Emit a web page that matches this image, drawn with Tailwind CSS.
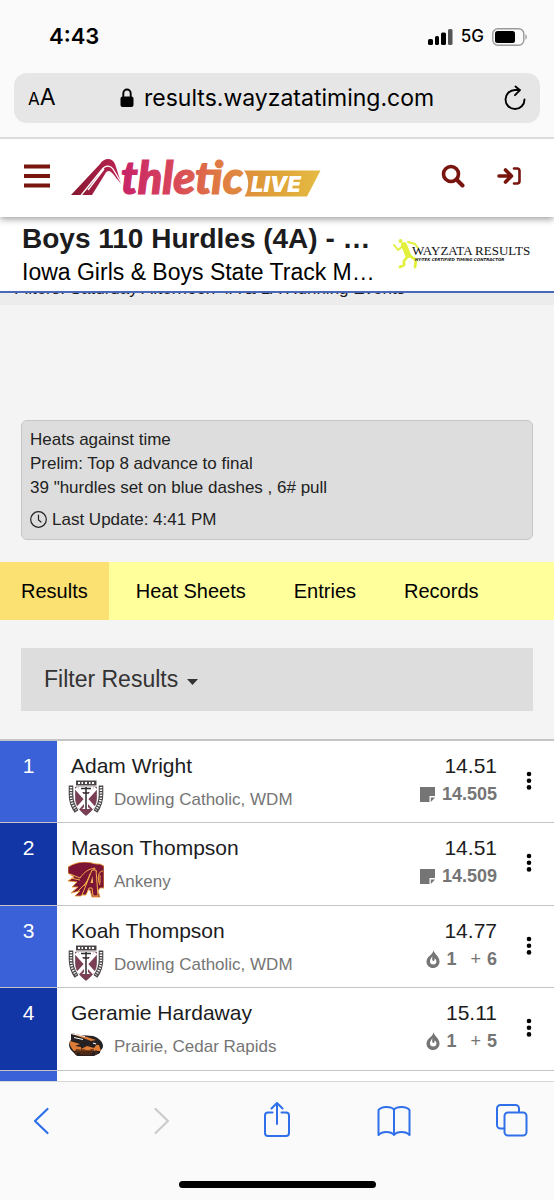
<!DOCTYPE html>
<html lang="en">
<head>
<meta charset="utf-8">
<meta name="viewport" content="width=device-width, initial-scale=1">
<title>Boys 110 Hurdles (4A)</title>
<script src="https://cdn.jsdelivr.net/npm/@tailwindcss/browser@4"></script>
</head>
<body class="bg-[#f4f4f4] text-[#1c1c1e] font-['Liberation_Sans',Arial,sans-serif]">
<svg class="hidden" aria-hidden="true">
  <symbol id="crest" viewBox="0 0 36 36">
    <path d="M8 .5h20.500v5H8z" fill="#4a4648"/>
    <path d="M10 3h2m1.500 0h1.500m2 0h2m2 0h1.500m1.500 0h2" stroke="#fff" stroke-width="1.800"/>
    <path d="M3 5.500v9c0 6 2 12 5.500 17M33 5.500v9c0 6-2 12-5.500 17" fill="none" stroke="#4a4648" stroke-width="4.600"/>
    <path d="M3 7v8c0 6 2 11 5 15M33 7v8c0 6-2 11-5 15" fill="none" stroke="#fff" stroke-width="2.400" stroke-dasharray="1.300 1.300"/>
    <path d="M7.500 7h21V18c0 8-4.500 13-10.500 17.500C12 31 7.500 26 7.500 18z" fill="#7a3f55" stroke="#5d3344" stroke-width=".6"/>
    <path d="M8 8l18 20M28 8L10 28" stroke="#fff" stroke-width="3.500"/>
    <path d="M10 7h16l-3 5h-3v15l2 2h-8l2-2V12h-3z" fill="#fff"/>
    <path d="M13 8.500h10M18 7v22M15.500 13h5" stroke="#2e2a2c" stroke-width="1.500"/>
  </symbol>
  <symbol id="hawk" viewBox="0 0 36 36">
    <path d="M0 5C8 0 17-1 24 1c3 1 5 1 8 1l4 2v22h-4l-2 3 2 6h-8l-2-7h-4l-5 6H7l5-5-9 2 7-6-6 0 5-5-9-1 6-4-6-4z" fill="#7c1435" stroke="#eaa03a" stroke-width=".9"/>
    <path d="M2 12l10 4M3 16l9 2M12 16c5-7 9-9 15-10L16 24M9 30l8-8 4-5M22 12l-4 10h5zM29 9c-4 3-4 12-1 17M35 9c-5 0-6 8-3 14M32 13v8" fill="none" stroke="#f3b04a" stroke-width="1"/>
    <path d="M14 33l10-25h4l2 26h-5l-1-8h-3l-3 7z" fill="#7c1435" stroke="#f3b04a" stroke-width="1"/>
    <path d="M22.500 21l2-7 .5 7z" fill="#f7c65f"/>
  </symbol>
  <symbol id="prairie" viewBox="0 0 36 36">
    <path d="M3 6l9 2 13 1c6 2 10 6 10 10 0 3-3 4-3 7l-6 3H9l-6-6c-3-4-2-8 0-10z" fill="#252122"/>
    <path d="M1 6l14 5 8 3 5-1-9-3zM2 14l10 3-5 2 6 1 6-3 12 1 2 6H6c-3-3-5-7-4-10z" fill="#df7c35"/>
    <path d="M3 6.500l14 3M6 10.500l9 2" stroke="#fff" stroke-width="1"/>
    <path d="M13 17l8-3 8 3-3 4-7-2-6 3z" fill="#252122"/>
    <path d="M8 23v5m0-5h3v2H8m5 3v-5h3v2h-3l3 3m2-5-1 5m2-5v5m2-5v5m2 0v-5h3m-3 2h2m3-2v5" fill="none" stroke="#5a2c14" stroke-width="1.400"/>
    <path d="M25 16l3 1" stroke="#fff" stroke-width="1.200"/>
  </symbol>
  <symbol id="note" viewBox="0 0 15 15"><path d="M0 0h15v9H9.500v6H0z" fill="#757575"/><path d="M15 10.500L10.800 15v-4.500z" fill="#757575"/></symbol>
  <symbol id="flame" viewBox="0 0 14 18"><path d="M7.500 0C8 4 13.500 6 13.500 11.500c0 4-3 6.500-6.500 6.500S.5 15.500.5 11.500C.5 9 2 7 4 5.500 6 4 7.300 2 7.500 0z" fill="#757575"/><path d="M6.500 6C5.500 8 4 9 4 11.300a3.200 3.200 0 0 0 6.400 0c0-1.500-1-2.300-1.800-3 .2 1.500-.2 2.600-1.100 2.600C6 10.900 6 8.500 6.500 6z" fill="#fff"/></symbol>
  <symbol id="dots" viewBox="0 0 6 20"><circle cx="3" cy="3" r="2.300"/><circle cx="3" cy="9.700" r="2.300"/><circle cx="3" cy="16.400" r="2.300"/></symbol>
</svg>

<div class="flex h-screen flex-col overflow-hidden">
  <header class="shrink-0 border-b-2 border-[#dcdcdc] bg-[#fafafa] text-black font-['Inter',sans-serif]">
    <div class="flex h-[73px] items-center justify-between pl-[49px] pr-[26px]">
      <span class="text-[22px] font-semibold">4:43</span>
      <div class="flex items-center">
        <svg class="mr-2 h-4 w-[25px]" viewBox="0 0 25 16"><rect y="10" width="5" height="6" rx="1.500"/><rect x="7" y="7" width="4" height="9" rx="1.500"/><rect x="13" y="3.500" width="5" height="12.500" rx="1.500"/><rect x="20" width="4.500" height="16" rx="1.500" fill="#555"/></svg>
        <span class="mr-2 text-[17px] font-medium">5G</span>
        <svg class="h-[18px] w-[36px]" viewBox="0 0 36 18"><rect x=".8" y=".8" width="31" height="16.400" rx="5" fill="none" stroke="#9a9a9a" stroke-width="1.400"/><rect x="3" y="3" width="20" height="12" rx="2.500"/><path d="M33.500 6q2.500 3 0 6z" fill="#888"/></svg>
      </div>
    </div>
    <div class="px-[14px] pb-[14px]">
      <div class="flex h-[50px] items-center justify-between rounded-[13px] bg-[#e6e6e6] px-[14px]">
        <button type="button" aria-label="Page settings" class="w-8 whitespace-nowrap text-left leading-6"><span class="text-[17px]">A</span><span class="text-[23px]">A</span></button>
        <div class="flex items-center gap-[10px]">
          <svg class="h-5 w-[14px]" viewBox="0 0 14 20"><rect x=".5" y="8.500" width="13" height="10.500" rx="2"/><path d="M3.300 9V5.500a3.700 4 0 0 1 7.400 0V9" fill="none" stroke="#000" stroke-width="1.900"/></svg>
          <label for="url" class="sr-only">Address</label>
          <input id="url" type="text" value="results.wayzatatiming.com" class="w-[300px] bg-transparent text-[23px] leading-8 outline-none">
        </div>
        <button type="button" aria-label="Reload"><svg class="h-[26px] w-[22px]" viewBox="0 0 22 26" fill="none" stroke="#000" stroke-width="1.900" stroke-linecap="round" stroke-linejoin="round"><path d="M20.500 14.500A9.500 9.500 0 1 1 11 5h5M11.500 1.500L16 5.200l-5 5"/></svg></button>
      </div>
    </div>
  </header>

  <main class="min-h-0 flex-1 overflow-hidden">
    <div class="relative z-10 flex h-[78px] items-center bg-white pl-6 pr-[33px] shadow-[0_2px_7px_rgba(0,0,0,0.4)]">
      <button type="button" aria-label="Menu" class="pb-1"><svg class="h-6 w-[26px]" viewBox="0 0 26 24" fill="#78150f"><rect width="26" height="4" y=".5"/><rect width="26" height="4" y="10"/><rect width="26" height="4" y="19.500"/></svg></button>
      <a href="#" class="ml-5" aria-label="AthleticLIVE home">
        <svg class="h-11 w-[252px]" viewBox="70 156 252 44">
          <defs>
            <linearGradient id="mark" x1="0" x2="1"><stop stop-color="#84172f"/><stop offset="1" stop-color="#bd2452"/></linearGradient>
            <linearGradient id="word" gradientUnits="userSpaceOnUse" x1="122" x2="320" y1="0" y2="0"><stop stop-color="#c62367"/><stop offset=".25" stop-color="#d8445a"/><stop offset=".5" stop-color="#e07c42"/><stop offset=".75" stop-color="#dea037"/><stop offset="1" stop-color="#e5bb43"/></linearGradient>
          </defs>
          <path d="M71 195L100 164C104 158 112 157 115 164L121.500 184C117 180 112 171 109 171C107 171 106 172 105 174L92 195z" fill="url(#mark)"/>
          <path d="M80.500 196L102 169.500C106 164 111 166 113 169L122 184M88 190L104 169" stroke="#fff" stroke-width="1.300" fill="none"/>
          <text x="121" y="194" font-family="Lato" font-size="45" font-weight="900" font-style="italic" fill="url(#word)" stroke="url(#word)" stroke-width="1.200">thletic</text>
          <path d="M244 170.500h76.500L307 196.500h-62.500c5-8 5-19-.5-26z" fill="url(#word)"/>
          <text x="251" y="191.500" font-family="Inter" font-size="22" font-weight="900" font-style="italic" fill="#fff">LIVE</text>
        </svg>
      </a>
      <div class="ml-auto flex items-center gap-8 pb-1 text-[#78150f]">
        <button type="button" aria-label="Search"><svg class="h-6 w-6" viewBox="0 0 24 24" fill="none" stroke="currentColor"><circle cx="10" cy="10" r="7.500" stroke-width="3.600"/><path d="M15.500 15.500l6 6" stroke-width="4" stroke-linecap="round"/></svg></button>
        <button type="button" aria-label="Log in"><svg class="h-5 w-6" viewBox="0 0 24 20" fill="none" stroke="currentColor" stroke-width="3.600" stroke-linecap="round" stroke-linejoin="round"><path d="M2 10h12M8.500 4L14.500 10l-6 6"/><path d="M17 2.500h3a2.500 2.500 0 0 1 2.500 2.500v10a2.500 2.500 0 0 1-2.500 2.500h-3" stroke-width="2.600"/></svg></button>
      </div>
    </div>

    <div class="flex h-[76px] items-center justify-between border-b-2 border-[#4a68b8] bg-white pl-[22px] pr-[23px]">
      <div class="min-w-0 pt-1 whitespace-nowrap">
        <h1 class="text-[28px] leading-8 font-bold">Boys 110 Hurdles (4A) - …</h1>
        <p class="text-[23px] leading-[34px] text-black">Iowa Girls &amp; Boys State Track M…</p>
      </div>
      <svg class="h-8 w-[140px] shrink-0" viewBox="391 239 140 32" role="img" aria-label="Wayzata Results">
        <g fill="none" stroke="#e2f03c" stroke-linecap="round" stroke-linejoin="round">
          <path d="M404 246l4 10" stroke-width="6"/><path d="M403 247l-5 4-4-5M408 243l7 2 3 4" stroke-width="2"/><path d="M408 257l-4 5 0 4-4 2M410 257l6 4-1 7" stroke-width="2.800"/><circle cx="400.500" cy="242" r="1" stroke-width="2"/>
        </g>
        <text x="412" y="256" font-family="Liberation Serif" font-size="13" fill="#111">WAYZATA RESULTS</text>
        <text x="415" y="262" font-family="DejaVu Sans" font-size="4" font-style="italic" font-weight="700" fill="#222">HY-TEK CERTIFIED TIMING CONTRACTOR</text>
      </svg>
    </div>
    <div class="flex h-3 items-end overflow-hidden bg-[#ececec] px-[14px] pb-[6px]">
      <p class="whitespace-nowrap text-[17px] leading-5">Filters: Saturday Afternoon 4A &amp; 1A Running Events</p>
    </div>

    <section class="mx-[21px] mt-[115px] rounded-md border border-[#c6c6c6] bg-[#dddddd] px-2 py-[7px] text-[17px] leading-6 text-[#222]">
      <p>Heats against time</p>
      <p>Prelim: Top 8 advance to final</p>
      <p>39 "hurdles set on blue dashes , 6# pull</p>
      <p class="mt-2 flex items-center gap-1"><svg class="h-[18px] w-[18px]" viewBox="0 0 18 18" fill="none" stroke="#222" stroke-width="1.200" stroke-linecap="round"><circle cx="8.500" cy="8.500" r="7.800"/><path d="M8.500 4v5l2.500 2"/></svg>Last Update: 4:41 PM</p>
    </section>

    <nav class="mt-[22px] flex h-[58px] bg-[#ffff9c] text-[20px] text-black">
      <a href="#" aria-current="page" class="mr-[3px] flex items-center bg-[#fae172] px-[21px]">Results</a>
      <a href="#" class="flex items-center px-6">Heat Sheets</a>
      <a href="#" class="flex items-center px-6">Entries</a>
      <a href="#" class="flex items-center px-6">Records</a>
    </nav>

    <div class="mt-7 px-[21px]">
      <button type="button" class="flex h-[63px] w-full items-center gap-[9px] bg-[#dddddd] px-[23px] text-[23px] text-[#333]">Filter Results <svg class="mt-1 h-[6px] w-[11px]" viewBox="0 0 11 6"><path d="M0 0h11L5.500 6z" fill="#333"/></svg></button>
    </div>

    <table class="mt-7 w-full border-separate border-spacing-0 bg-white text-[21px] leading-7 [&_td]:border-t [&_td]:border-[#c4c4c4] [&_td]:p-0 [&_td]:align-top">
      <tbody>
        <tr class="h-[83px] [&>td]:border-t-2">
          <td class="w-[57px] bg-[#3a61d8]"><div class="pt-[11px] text-center text-white">1</div></td>
          <td><div class="pt-[11px] pl-[14px]">Adam Wright</div>
            <div class="flex items-center gap-[10px] pl-[11px]"><svg class="h-9 w-9"><use href="#crest"/></svg><span class="pt-1 text-[17px] text-[#757575]">Dowling Catholic, WDM</span></div></td>
          <td class="w-[130px]"><div class="pt-[11px] text-right">14.51</div><div class="mt-[2px] flex items-center justify-end gap-[7px] text-[18px] leading-6 font-bold text-[#757575]"><svg class="h-[15px] w-[15px]"><use href="#note"/></svg>14.505</div></td>
          <td class="w-[57px]"><button type="button" aria-label="More" class="mt-[30px] ml-[29px] block"><svg class="h-5 w-[6px]"><use href="#dots"/></svg></button></td>
        </tr>
        <tr class="h-[83px]">
          <td class="bg-[#1336a6]"><div class="pt-[11px] text-center text-white">2</div></td>
          <td><div class="pt-[11px] pl-[14px]">Mason Thompson</div>
            <div class="flex items-center gap-[10px] pl-[11px]"><svg class="h-9 w-9"><use href="#hawk"/></svg><span class="pt-1 text-[17px] text-[#757575]">Ankeny</span></div></td>
          <td><div class="pt-[11px] text-right">14.51</div><div class="mt-[2px] flex items-center justify-end gap-[7px] text-[18px] leading-6 font-bold text-[#757575]"><svg class="h-[15px] w-[15px]"><use href="#note"/></svg>14.509</div></td>
          <td><button type="button" aria-label="More" class="mt-[30px] ml-[29px] block"><svg class="h-5 w-[6px]"><use href="#dots"/></svg></button></td>
        </tr>
        <tr class="h-[82px]">
          <td class="bg-[#3a61d8]"><div class="pt-[11px] text-center text-white">3</div></td>
          <td><div class="pt-[11px] pl-[14px]">Koah Thompson</div>
            <div class="flex items-center gap-[10px] pl-[11px]"><svg class="h-9 w-9"><use href="#crest"/></svg><span class="pt-1 text-[17px] text-[#757575]">Dowling Catholic, WDM</span></div></td>
          <td><div class="pt-[11px] text-right">14.77</div><div class="mt-[2px] flex items-center justify-end text-[18px] leading-6 font-bold text-[#757575]"><svg class="mr-[6px] h-[18px] w-[14px]"><use href="#flame"/></svg>1<span class="mr-[6px] ml-[14px] font-normal">+</span>6</div></td>
          <td><button type="button" aria-label="More" class="mt-[30px] ml-[29px] block"><svg class="h-5 w-[6px]"><use href="#dots"/></svg></button></td>
        </tr>
        <tr class="h-[83px]">
          <td class="bg-[#1336a6]"><div class="pt-[11px] text-center text-white">4</div></td>
          <td><div class="pt-[11px] pl-[14px]">Geramie Hardaway</div>
            <div class="flex items-center gap-[10px] pl-[11px]"><svg class="h-9 w-9"><use href="#prairie"/></svg><span class="pt-1 text-[17px] text-[#757575]">Prairie, Cedar Rapids</span></div></td>
          <td><div class="pt-[11px] text-right">15.11</div><div class="mt-[2px] flex items-center justify-end text-[18px] leading-6 font-bold text-[#757575]"><svg class="mr-[6px] h-[18px] w-[14px]"><use href="#flame"/></svg>1<span class="mr-[6px] ml-[14px] font-normal">+</span>5</div></td>
          <td><button type="button" aria-label="More" class="mt-[30px] ml-[29px] block"><svg class="h-5 w-[6px]"><use href="#dots"/></svg></button></td>
        </tr>
        <tr class="h-[83px]"><td class="bg-[#3a61d8]"></td><td></td><td></td><td></td></tr>
      </tbody>
    </table>
  </main>

  <footer class="flex h-[119px] shrink-0 flex-col items-center justify-between border-t border-[#d8d8d8] bg-[#fafafa] pb-3">
    <div class="flex w-full items-center justify-between pl-[32px] pr-[26px] pt-[20px] text-[#2f70ea]">
      <button type="button" aria-label="Back"><svg class="h-9 w-[18px]" viewBox="0 0 18 36" fill="none" stroke="currentColor" stroke-width="2.200" stroke-linecap="round" stroke-linejoin="round"><path d="M15.500 7L3 19l12.500 12"/></svg></button>
      <button type="button" aria-label="Forward" disabled class="ml-[17px] text-[#cbcbcb]"><svg class="h-9 w-[18px]" viewBox="0 0 18 36" fill="none" stroke="currentColor" stroke-width="2.200" stroke-linecap="round" stroke-linejoin="round"><path d="M3.500 7L16 19 3.500 31"/></svg></button>
      <button type="button" aria-label="Share" class="ml-2"><svg class="h-9 w-[28px]" viewBox="0 0 28 36" fill="none" stroke="currentColor" stroke-width="2" stroke-linecap="round" stroke-linejoin="round"><path d="M9.500 10.500H5a3 3 0 0 0-3 3V31a3 3 0 0 0 3 3h18a3 3 0 0 0 3-3V13.500a3 3 0 0 0-3-3h-4.500M14 22V1.500M8.500 6.500L14 1l5.500 5.500"/></svg></button>
      <button type="button" aria-label="Bookmarks" class="ml-px"><svg class="h-9 w-[34px]" viewBox="0 0 34 36" fill="none" stroke="currentColor" stroke-width="2" stroke-linecap="round" stroke-linejoin="round"><path d="M17 7.500V33M1.500 33V8C4.500 4 14 4 17 7.500c3-3.500 12.500-3.500 15.500.5v25c-3.500-4-12.500-4-15.500 0-3-4-12-4-15.500 0"/></svg></button>
      <button type="button" aria-label="Tabs"><svg class="h-9 w-8" viewBox="0 0 32 36" fill="none" stroke="currentColor" stroke-width="2" stroke-linecap="round" stroke-linejoin="round"><rect x="8.500" y="10.500" width="22" height="23" rx="3.500"/><path d="M8 26.500H4.500A3.500 3.500 0 0 1 1 23V6.500A3.500 3.500 0 0 1 4.500 3h15A3.500 3.500 0 0 1 23 6.500V10"/></svg></button>
    </div>
    <div class="h-[7px] w-[197px] rounded-full bg-black"></div>
  </footer>
</div>
</body>
</html>
